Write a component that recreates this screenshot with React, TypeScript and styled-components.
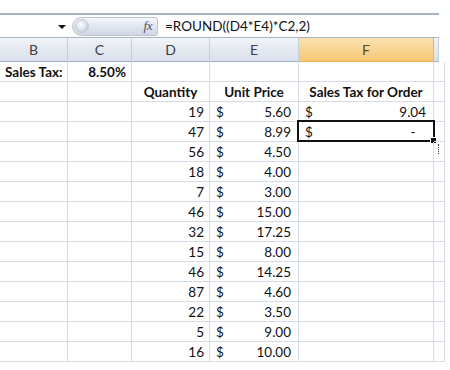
import React from "react";
import styled, { createGlobalStyle } from "styled-components";

const Global = createGlobalStyle`
  html, body { margin: 0; padding: 0; background: #ffffff; }
  body { width: 450px; height: 370px; overflow: hidden; font-family: Lato, "Open Sans", sans-serif; }
`;

const Page = styled.div`
  padding-top: 13px;
  width: 439px;
`;

const FormulaBar = styled.div`
  display: flex;
  align-items: center;
  height: 22px;
  border-top: 2px solid #a7b4c6;
  border-bottom: 1px solid #a7b4c6;
  background: #ffffff;
`;

const NameBox = styled.div`
  width: 70px;
  height: 100%;
  display: flex;
  align-items: center;
  justify-content: flex-end;
  padding-right: 4px;
  box-sizing: border-box;
`;

const Arrow = styled.div`
  width: 0;
  height: 0;
  border-left: 4px solid transparent;
  border-right: 4px solid transparent;
  border-top: 4px solid #111;
  margin-top: 1px;
`;

const Pill = styled.div`
  width: 86px;
  height: 19px;
  margin-left: 2px;
  box-sizing: border-box;
  border: 1px solid #b8c4d4;
  border-radius: 10px 3px 3px 10px;
  background: linear-gradient(#f4f6fa, #dfe5ee 55%, #cdd6e3);
  display: flex;
  align-items: center;
  justify-content: space-between;
  padding: 0 5px 0 2px;
`;

const Knob = styled.div`
  width: 14px;
  height: 14px;
  border-radius: 50%;
  background: radial-gradient(circle at 40% 40%, #ffffff, #d7dde6 55%, #aeb8c6);
  border: 1px solid #c2cad6;
  box-sizing: border-box;
`;

const Fx = styled.span`
  font-family: "Liberation Serif", serif;
  font-style: italic;
  font-size: 13px;
  color: #4a5160;
  letter-spacing: -0.5px;
`;

const Formula = styled.div`
  flex: 1;
  padding-left: 7px;
  font-size: 13.5px;
  color: #111;
  white-space: nowrap;
`;

const Grid = styled.div`
  display: grid;
  grid-template-columns: 68px 64px 78px 89px 135px 5px;
  grid-template-rows: 24px;
  grid-auto-rows: 20px;
`;

const Header = styled.div<{ $active?: boolean }>`
  box-sizing: border-box;
  display: flex;
  align-items: center;
  justify-content: center;
  font-size: 14px;
  color: ${(p) => (p.$active ? "#5a4a2a" : "#3a3f48")};
  border-right: 1px solid ${(p) => (p.$active ? "#e3b567" : "#c6d0dc")};
  border-bottom: 1px solid ${(p) => (p.$active ? "#e8b450" : "#9eb0c6")};
  background: ${(p) =>
    p.$active
      ? "linear-gradient(#fbe3b2, #f8d592 50%, #f6c772)"
      : "linear-gradient(#f2f5f9, #e4e9f0 50%, #dbe2eb)"};
`;

const Cell = styled.div<{ $align?: "left" | "right" | "center"; $bold?: boolean }>`
  position: relative;
  box-sizing: border-box;
  border-right: 1px solid #d6dce5;
  border-bottom: 1px solid #d6dce5;
  font-size: 13.5px;
  line-height: 21px;
  font-weight: ${(p) => (p.$bold ? 700 : 400)};
  color: #111;
  white-space: nowrap;
  padding: 0 5px;
  display: flex;
  justify-content: ${(p) =>
    p.$align === "right" ? "flex-end" : p.$align === "center" ? "center" : "space-between"};
`;

const Money = styled.div`
  display: flex;
  justify-content: space-between;
  width: 100%;
  padding: 0 2px 0 1px;
`;

const Selection = styled.div`
  position: absolute;
  left: -2px;
  top: -2px;
  right: -2px;
  bottom: -1px;
  border: 2px solid #111;
  pointer-events: none;
`;

const Handle = styled.div`
  position: absolute;
  right: -4px;
  bottom: -4px;
  width: 5px;
  height: 5px;
  background: #111;
  border: 1px solid #fff;
`;

const Dots = styled.div`
  position: absolute;
  right: -6px;
  top: 22px;
  width: 0;
  height: 10px;
  border-left: 1px dotted #333;
`;

const data: [number, string][] = [
  [19, "5.60"],
  [47, "8.99"],
  [56, "4.50"],
  [18, "4.00"],
  [7, "3.00"],
  [46, "15.00"],
  [32, "17.25"],
  [15, "8.00"],
  [46, "14.25"],
  [87, "4.60"],
  [22, "3.50"],
  [5, "9.00"],
  [16, "10.00"],
];

export default function App() {
  return (
    <Page>
      <Global />
      <FormulaBar>
        <NameBox>
          <Arrow />
        </NameBox>
        <Pill>
          <Knob />
          <Fx>fx</Fx>
        </Pill>
        <Formula>=ROUND((D4*E4)*C2,2)</Formula>
      </FormulaBar>
      <Grid>
        <Header>B</Header>
        <Header>C</Header>
        <Header>D</Header>
        <Header>E</Header>
        <Header $active>F</Header>
        <Header />

        <Cell $bold>Sales Tax:</Cell>
        <Cell $bold $align="right">8.50%</Cell>
        <Cell />
        <Cell />
        <Cell />
        <Cell />

        <Cell />
        <Cell />
        <Cell $bold $align="center">Quantity</Cell>
        <Cell $bold $align="center">Unit Price</Cell>
        <Cell $bold $align="center">Sales Tax for Order</Cell>
        <Cell />

        {data.map(([q, p], i) => (
          <React.Fragment key={i}>
            <Cell />
            <Cell />
            <Cell $align="right">{q}</Cell>
            <Cell>
              <Money>
                <span>$</span>
                <span>{p}</span>
              </Money>
            </Cell>
            <Cell>
              {i === 0 && (
                <Money>
                  <span>$</span>
                  <span>9.04</span>
                </Money>
              )}
              {i === 1 && (
                <>
                  <Money>
                    <span>$</span>
                    <span>-&nbsp;&nbsp;&nbsp;</span>
                  </Money>
                  <Selection>
                    <Handle />
                    <Dots />
                  </Selection>
                </>
              )}
            </Cell>
            <Cell />
          </React.Fragment>
        ))}
      </Grid>
    </Page>
  );
}
